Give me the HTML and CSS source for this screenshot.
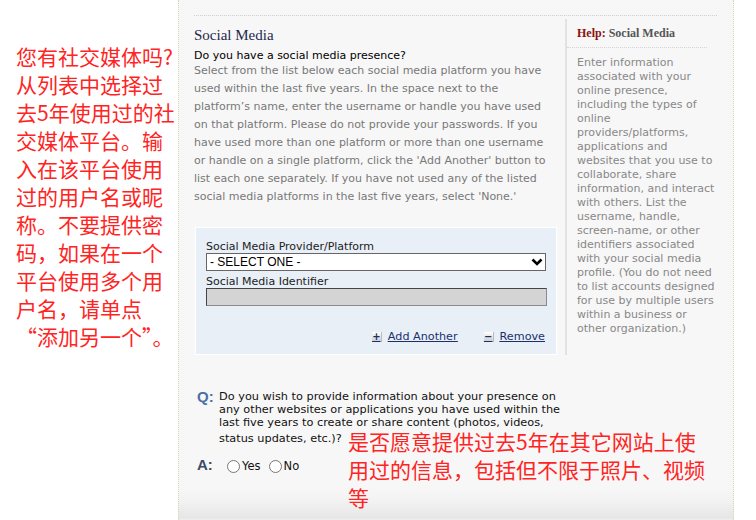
FILE: index.html
```html
<!DOCTYPE html>
<html lang="en">
<head>
  <meta charset="UTF-8">
  <title>Social Media</title>
  <link rel="stylesheet" href="styles.css">
</head>
<body>
  <!-- пояснение слева -->
  <div class="note" lang="zh">
    您有社交媒体吗?从列表中选择过去5年使用过的社交媒体平台。输入在该平台使用过的用户名或昵称。不要提供密码，如果在一个平台使用多个用户名，请单点“添加另一个”。
  </div>

  <div class="panel">
    <div class="panel-inner">
      <div class="main">
        <h2 class="title">Social Media</h2>
        <p class="ask">Do you have a social media presence?</p>
        <p class="desc">Select from the list below each social media platform you have<br>
          used within the last five years. In the space next to the<br>
          platform’s name, enter the username or handle you have used<br>
          on that platform. Please do not provide your passwords. If you<br>
          have used more than one platform or more than one username<br>
          or handle on a single platform, click the 'Add Another' button to<br>
          list each one separately. If you have not used any of the listed<br>
          social media platforms in the last five years, select 'None.'</p>

        <div class="form-box">
          <label class="field-label">Social Media Provider/Platform</label>
          <div class="select-box">
            <span>- SELECT ONE -</span>
            <svg width="12" height="8" viewBox="0 0 12 8"><path d="M1.5 1.5 L6 6 L10.5 1.5" fill="none" stroke="#000" stroke-width="2.6"/></svg>
          </div>
          <label class="field-label">Social Media Identifier</label>
          <input class="ident" type="text" disabled>
          <div class="actions">
            <a href="#" class="act"><span class="act-icon">+</span><span class="act-text">Add Another</span></a>
            <a href="#" class="act"><span class="act-icon">−</span><span class="act-text">Remove</span></a>
          </div>
        </div>
      </div>

      <div class="help">
        <div class="help-title"><span class="help-lbl">Help:</span> Social Media</div>
        <p class="help-text">Enter information<br>
          associated with your<br>
          online presence,<br>
          including the types of<br>
          online<br>
          providers/platforms,<br>
          applications and<br>
          websites that you use to<br>
          collaborate, share<br>
          information, and interact<br>
          with others. List the<br>
          username, handle,<br>
          screen-name, or other<br>
          identifiers associated<br>
          with your social media<br>
          profile. (You do not need<br>
          to list accounts designed<br>
          for use by multiple users<br>
          within a business or<br>
          other organization.)</p>
      </div>
    </div>

    <div class="qa">
      <div class="q-row">
        <span class="q-mark">Q:</span>
        <p class="q-text">Do you wish to provide information about your presence on<br>
          any other websites or applications you have used within the<br>
          last five years to create or share content (photos, videos,<br>
          <span class="q-last">status updates, etc.)?</span></p>
      </div>
      <div class="a-row">
        <span class="q-mark">A:</span>
        <label class="radio"><input type="radio" name="other">Yes</label>
        <label class="radio"><input type="radio" name="other">No</label>
      </div>
      <div class="note-q" lang="zh">是否愿意提供过去5年在其它网站上使用过的信息，包括但不限于照片、视频等</div>
    </div>
  </div>
</body>
</html>
```

FILE: styles.css
```css
body {
  margin: 0;
  background: #fff;
  display: flex;
  height: 520px;
  overflow: hidden;
  font-family: "DejaVu Sans", Verdana, sans-serif;
}

/* красные пояснения */
.note, .note-q {
  color: #ff2424;
  font-family: "Noto Sans CJK SC", sans-serif;
  font-size: 21px;
  line-height: 28px;
}
.note {
  width: 160px;
  padding: 42px 2px 0 16px;
  flex: none;
}

.panel {
  width: 523px;
  border-left: 1px dotted #e0d2b8;
  border-right: 1px dotted #e0d2b8;
  background: linear-gradient(#f7f7f7 488px, #f3f3f3 500px, #e6e6e6 518px, #efefef 520px);
  padding: 15px 16px 0 15px;
  flex: none;
}
.panel-inner {
  display: flex;
  border-top: 1px dotted #cfcfcf;
}
.main {
  width: 371px;
  flex: none;
  white-space: nowrap;
}
.title {
  font-family: "Liberation Serif", serif;
  font-weight: normal;
  font-size: 15px;
  color: #1d2a4d;
  margin: 10px 0 0;
  line-height: 18px;
}
.ask {
  margin: 6px 0 0;
  font-size: 11px;
  line-height: 11px;
  color: #000;
}
.desc {
  margin: 1px 0 0;
  font-size: 11px;
  line-height: 18px;
  color: #777;
}
.form-box {
  margin: 21px 8px 0 1px;
  background: #e8eff7;
  border: 1px solid #fff;
  padding: 12px 10px 11px;
}
.field-label {
  display: block;
  font-size: 11px;
  line-height: 13px;
  color: #222;
}
.select-box {
  display: flex;
  justify-content: space-between;
  align-items: center;
  height: 16px;
  background: #fff;
  border: 1px solid #666;
  padding: 0 2px 0 3px;
  font-family: "Liberation Sans", Arial, sans-serif;
  font-size: 12px;
  color: #000;
  margin-bottom: 4px;
}
.ident {
  display: block;
  box-sizing: border-box;
  width: 341px;
  height: 18px;
  margin: 0;
  background: #d4d4d4;
  border: 1px solid #8a8a8a;
  border-top-color: #444;
  border-left-color: #444;
}
.actions {
  display: flex;
  justify-content: flex-end;
  gap: 26px;
  margin-top: 24px;
  padding-right: 1px;
}
.act {
  display: flex;
  align-items: center;
  gap: 6px;
  color: #1b2f6b;
  font-size: 11.2px;
}
.act-icon {
  width: 9px;
  height: 9px;
  line-height: 9px;
  text-align: center;
  font-size: 10px;
  font-weight: bold;
  color: #1b2f6b;
  background: linear-gradient(#fff, #cfcfcf);
  border-right: 1px solid #bbb;
  border-bottom: 1px solid #bbb;
}
.act-text {
  text-decoration: underline;
}

.help {
  width: 140px;
  flex: none;
  border-left: 2px solid #e2e2e2;
  margin-top: 3px;
  padding: 0 0 11px 0;
}
.help-title {
  font-family: "Liberation Serif", serif;
  font-weight: bold;
  font-size: 12px;
  color: #555;
  padding: 7px 0 6px 10px;
  border-bottom: 1px dotted #d4d4d4;
}
.help-lbl {
  color: #8b1212;
}
.help-text {
  margin: 8px 0 0 10px;
  font-size: 11px;
  line-height: 14px;
  color: #888;
  white-space: nowrap;
}

.qa {
  position: relative;
  margin-top: 35px;
}
.q-row, .a-row {
  display: flex;
  align-items: flex-start;
}
.q-mark {
  width: 22px;
  flex: none;
  padding-left: 3px;
  font-family: "Liberation Sans", Arial, sans-serif;
  font-weight: bold;
  font-size: 15px;
  line-height: 14px;
  color: #4c6fa6;
}
.a-row .q-mark {
  color: #3b4a66;
}
.q-text {
  margin: 0;
  font-size: 11.3px;
  line-height: 13px;
  color: #111;
  white-space: nowrap;
}
.q-last {
  display: inline-block;
  margin-top: 3px;
}
.a-row {
  margin-top: 13px;
}
.radio {
  display: flex;
  align-items: center;
  font-size: 11.5px;
  color: #111;
  margin-top: 1px;
}
.radio input {
  margin: 0 2px 0 8px;
}
.note-q {
  position: absolute;
  left: 154px;
  top: 37px;
  width: 365px;
}
```
